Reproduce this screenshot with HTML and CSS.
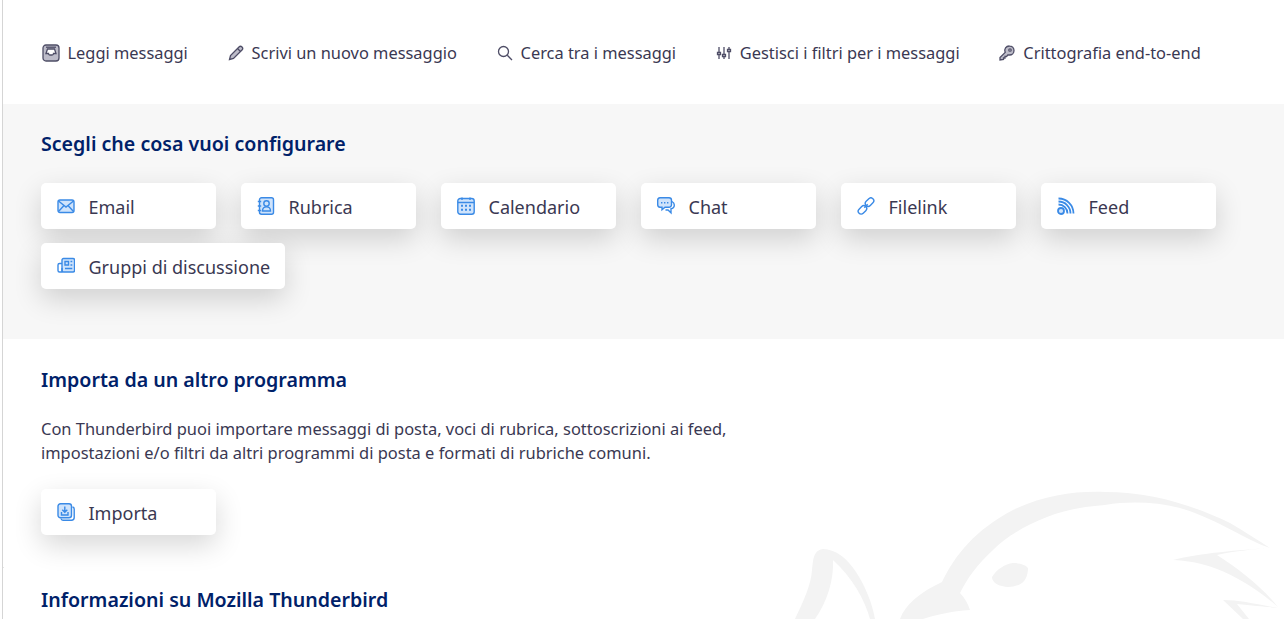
FILE: index.html
```html
<!DOCTYPE html>
<html lang="it">
<head>
    <meta charset="UTF-8">
    <meta name="viewport" content="width=device-width, initial-scale=1.0">
    <title>Mozilla Thunderbird</title>
    <link rel="stylesheet" href="styles.css">
</head>
<body>
    <div class="page">
        <div class="frame-tick"></div>
        <svg class="watermark" viewBox="0 0 504 139" aria-hidden="true">
            <path d="M15 139C24 120 31 105 32 90C33 78 34 70 43 69C55 69 67 78 76 92C85 106 92 122 95 139H90C85 120 72 97 53 80C54 100 47 122 35 139Z"/>
            <path d="M120 139C125 125 140 112 162 102C175 75 195 50 233 30C265 15 295 11 325 12C370 12 410 24 450 43C465 52 478 60 490 68C465 60 440 40 400 28C375 22 350 21 325 25C300 27 285 30 267 37C240 48 225 58 213 70C197 85 188 97 180 113C185 118 188 124 190 130C172 131 155 135 143 139Z"/>
            <path d="M490 68C460 70 420 73 393 80C420 81 455 90 498 127C480 105 460 90 437 75C455 71 475 69 490 68Z"/>
            <path d="M498 128C475 124 460 120 443 120L463 139H469L457 124C475 126 490 127 498 128Z"/>
            <path d="M212 97C217 89 225 84 233 83C240 83 246 85 248 88C248 94 246 100 242 103C236 107 228 108 222 106C216 105 212 101 212 97Z"/>
        </svg>

        <nav class="quick-links">
            <a class="quick-link" href="#">
                <svg class="quick-icon quick-icon-wide" viewBox="0 0 18 18"><rect x="1" y="1" width="16" height="16" rx="3" fill="#bdbcc9"/><path fill="#fff" d="M4 9.500 5.500 5h7L14 9.500h-2.500a1.500 1.500 0 0 1-1.500 1.500H8a1.500 1.500 0 0 1-1.500-1.500Z"/><path d="M4 3.200h10"/></svg>
                Leggi messaggi
            </a>
            <a class="quick-link" href="#">
                <svg class="quick-icon" viewBox="0 0 16 16"><path fill="#bdbcc9" d="M1.500 14.500 2.500 10.500 11 2a1.800 1.800 0 0 1 3 3L5.500 13.500Z"/><path d="M9.500 3.500l3 3"/></svg>
                Scrivi un nuovo messaggio
            </a>
            <a class="quick-link" href="#">
                <svg class="quick-icon" viewBox="0 0 16 16"><circle cx="6.500" cy="6.500" r="5"/><path d="m10.300 10.300 4.700 4.700"/></svg>
                Cerca tra i messaggi
            </a>
            <a class="quick-link" href="#">
                <svg class="quick-icon" viewBox="0 0 16 16"><path d="M3 2v5M3 10v4M8 2v7M8 12v2M13 2v2M13 7v7M1.500 7.500h3v2h-3ZM6.500 9.500h3v2h-3ZM11.500 4.500h3v2h-3Z"/></svg>
                Gestisci i filtri per i messaggi
            </a>
            <a class="quick-link" href="#">
                <svg class="quick-icon" viewBox="0 0 16 16"><path fill="#bdbcc9" d="M10.500 1a4.500 4.500 0 0 1 0 9c-.5 0-1-.1-1.400-.2L7.500 11.500H6v1.500H4.500v1.500L1 15v-2.500l5.200-5.100A4.500 4.500 0 0 1 10.500 1Z"/><circle cx="11" cy="5" r="1.200" fill="#fff"/></svg>
                Crittografia end-to-end
            </a>
        </nav>

        <section class="setup">
            <h2 class="section-title">Scegli che cosa vuoi configurare</h2>
            <div class="btn-row">
                <a class="tile" href="#">
                    <svg class="tile-icon" viewBox="0 0 18 18"><rect x="1" y="3" width="16" height="12.500" rx="2" fill="#cfe3fb"/><path d="m1.500 4 7.500 6 7.500-6M1.500 14.500 7 8.500M16.500 14.500 11 8.500"/></svg>
                    <span>Email</span>
                </a>
                <a class="tile" href="#">
                    <svg class="tile-icon" viewBox="0 0 18 18"><rect x="2.500" y=".8" width="14" height="16.400" rx="2" fill="#cfe3fb"/><circle cx="9.500" cy="6.500" r="2.700"/><path d="M5.500 14c0-5.500 8-5.500 8 0ZM.8 4.500h3.400M.8 9h3.400M.8 13.500h3.400"/></svg>
                    <span>Rubrica</span>
                </a>
                <a class="tile" href="#">
                    <svg class="tile-icon" viewBox="0 0 18 18"><rect x=".8" y="1.500" width="16.400" height="15.700" rx="2.500" fill="#cfe3fb"/><path d="M.8 5.500h16.400M5 .5v2.500M13 .5v2.500"/><path class="dots" d="M4 7.800h2v2H4zM8 7.800h2v2H8zM12 7.800h2v2h-2zM4 11.800h2v2H4zM8 11.800h2v2H8zM12 11.800h2v2h-2z"/></svg>
                    <span>Calendario</span>
                </a>
                <a class="tile" href="#">
                    <svg class="tile-icon" viewBox="0 0 18 18"><path fill="#cfe3fb" d="M3 .8h9a2.500 2.500 0 0 1 2.500 2.500v4.500A2.500 2.500 0 0 1 12 10.300H8l-3 2.500v-2.500H3A2.500 2.500 0 0 1 .7 7.800V3.300A2.500 2.500 0 0 1 3 .8Z"/><path d="M15 4.500c1.500.8 2.300 2 2.300 3.500 0 2-1.500 3.500-3.300 3.800v4L11 13H8.500"/><path class="dots" d="M4 5h1.400v1.400H4zM7 5h1.400v1.400H7zM10 5h1.400v1.400H10z"/></svg>
                    <span>Chat</span>
                </a>
                <a class="tile" href="#">
                    <svg class="tile-icon" viewBox="0 0 18 18"><rect x=".7" y="10" width="9.500" height="5.800" rx="2.900" transform="rotate(-45 5.450 12.900)"/><rect x="7.800" y="2.200" width="9.500" height="5.800" rx="2.900" transform="rotate(-45 12.550 5.100)"/><path d="m7.300 10.700 3.400-3.400"/></svg>
                    <span>Filelink</span>
                </a>
                <a class="tile" href="#">
                    <svg class="tile-icon tile-icon-bold" viewBox="0 0 18 18"><circle cx="4" cy="14" r="3" fill="#cfe3fb"/><path d="M1.500 7.500a9 9 0 0 1 9 9M1.500 4.500a12 12 0 0 1 12 12M1.500 1.500a15 15 0 0 1 15 15"/></svg>
                    <span>Feed</span>
                </a>
                <a class="tile tile-auto" href="#">
                    <svg class="tile-icon" viewBox="0 0 18 18"><rect x="5" y="1.500" width="12.500" height="13.500" rx="1.500" fill="#cfe3fb"/><path d="M5 6.500H2.500A1.500 1.500 0 0 0 1 8v5.500A1.500 1.500 0 0 0 2.500 15H5v-4M8 4.500h3.500V8H8zM13.500 4.500h1.800M13.500 8h1.800M8 11.500h7.300"/></svg>
                    <span>Gruppi di discussione</span>
                </a>
            </div>
        </section>

        <section class="import">
            <h2 class="section-title">Importa da un altro programma</h2>
            <p class="import-text">Con Thunderbird puoi importare messaggi di posta, voci di rubrica, sottoscrizioni ai feed,<br>impostazioni e/o filtri da altri programmi di posta e formati di rubriche comuni.</p>
            <a class="tile" href="#">
                <svg class="tile-icon" viewBox="0 0 18 18"><path d="M15.500 4a2 2 0 0 1 1.700 2v8.500a2.700 2.700 0 0 1-2.700 2.700H6a2 2 0 0 1-2-1.700"/><rect x="1" y=".8" width="13.500" height="14" rx="2.500" fill="#cfe3fb"/><path d="M7.800 3.500v5.500M5.300 6.800l2.500 2.500 2.500-2.500M4.500 9v3h6.500V9"/></svg>
                <span>Importa</span>
            </a>
        </section>

        <section class="about">
            <h2 class="section-title">Informazioni su Mozilla Thunderbird</h2>
        </section>
    </div>
</body>
</html>
```

FILE: styles.css
```css
html, body { margin: 0; height: 100%; overflow: hidden; background: #fff; }
body { font-family: "Noto Sans", "Open Sans", sans-serif; color: #3a3852; }
a { color: inherit; text-decoration: none; }

.page { position: relative; height: 619px; overflow: hidden; border-left: 1px solid #d5d5d5; margin-left: 2px; }
.frame-tick { position: absolute; left: 0; top: 567px; width: 1px; height: 1px; background: #e6e6e6; }
.watermark { position: absolute; right: 0; bottom: 0; width: 504px; height: 139px; }
.watermark path { fill: #f3f3f3; }

.quick-links { display: flex; height: 104px; padding-left: 38.500px; padding-top: 1px; align-items: center; gap: 39.700px; box-sizing: border-box; }
.quick-link { display: flex; align-items: center; gap: 8px; font-size: 16.400px; white-space: nowrap; }
.quick-icon { width: 16px; height: 16px; flex: none; fill: none; stroke: #4e4d66; stroke-width: 1.300; }
.quick-icon-wide { width: 18px; height: 18px; }

.setup { background: #f7f7f7; height: 235px; box-sizing: border-box; padding: 26px 38px 0; position: relative; }
.section-title { margin: 0; font-size: 19.600px; line-height: 28px; font-weight: 600; color: #002169; }
.btn-row { display: flex; flex-wrap: wrap; gap: 14px 25px; margin-top: 25px; }

.tile { display: inline-flex; align-items: center; gap: 13.500px; min-width: 175px; height: 46px; box-sizing: border-box; padding: 0 15px 0 16px; background: #fff; border-radius: 5px; box-shadow: 0 10px 28px rgba(0, 0, 0, 0.16); font-size: 18px; white-space: nowrap; }
.tile span { padding-top: 2px; }
.tile-auto { min-width: 0; }
.tile-icon { width: 18px; height: 18px; flex: none; fill: none; stroke: #3a8ae6; stroke-width: 1.400; }
.tile-icon-bold { stroke-width: 1.800; }
.tile-icon .dots { fill: #3a8ae6; stroke: none; }

.import { position: relative; padding: 27px 38px 0; }
.import-text { margin: 23px 0 24px; font-size: 16.450px; line-height: 24px; }

.about { position: relative; padding: 51px 38px 0; }
```
